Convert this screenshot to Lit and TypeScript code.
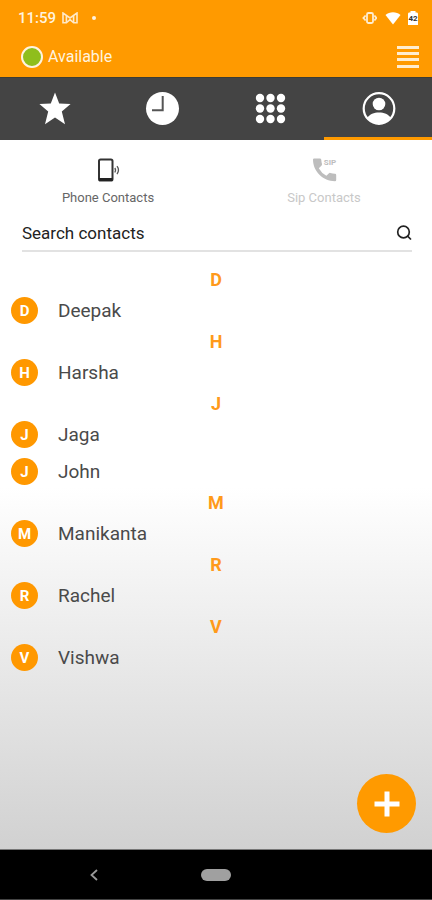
import { LitElement, html, css, svg } from "lit";
import { customElement, property, state } from "lit/decorators.js";
import { classMap } from "lit/directives/class-map.js";

interface Section {
  letter: string;
  names: string[];
}

const SECTIONS: Section[] = [
  { letter: "D", names: ["Deepak"] },
  { letter: "H", names: ["Harsha"] },
  { letter: "J", names: ["Jaga", "John"] },
  { letter: "M", names: ["Manikanta"] },
  { letter: "R", names: ["Rachel"] },
  { letter: "V", names: ["Vishwa"] },
];

const TABS = [
  {
    label: "Favourites",
    icon: svg`<path fill="#fff" d="M19 1.5 L23.2 12.6 L34.6 13 L25.8 20.4 L29 33.2 L19 26.4 L9 33.2 L12.2 20.4 L3.4 13 L14.8 12.6 Z"/>`,
  },
  {
    label: "Recents",
    icon: svg`<circle cx="18.5" cy="17.5" r="16.5" fill="#fff"/><path d="M18.7 5 V19.2 H8" fill="none" stroke="#555" stroke-width="2"/>`,
  },
  {
    label: "Keypad",
    icon: svg`${[7, 17.5, 28].map((y) =>
      [8, 18.5, 29].map((x) => svg`<circle cx=${x} cy=${y} r="4.2" fill="#fff"/>`)
    )}`,
  },
  {
    label: "Contacts",
    icon: svg`<circle cx="19" cy="17.5" r="15.3" fill="none" stroke="#fff" stroke-width="2.2"/>
      <circle cx="19" cy="13" r="6.3" fill="#fff"/>
      <path fill="#fff" d="M7.5 26.5 C9.5 23.2 14 21.4 19 21.4 S28.5 23.2 30.5 26.5 C28 31 23.5 33 19 33 S10 31 7.5 26.5 Z"/>`,
  },
];

@customElement("contact-row")
export class ContactRow extends LitElement {
  @property() name = "";

  static styles = css`
    :host {
      display: block;
    }
    .row {
      display: flex;
      align-items: center;
      gap: 20px;
      width: 100%;
      height: 37px;
      padding: 0 11px;
      border: 0;
      background: none;
      font: 400 19px/24px Roboto, sans-serif;
      color: #4a4a4a;
      text-align: left;
    }
    .avatar {
      display: grid;
      place-items: center;
      width: 27px;
      height: 27px;
      border-radius: 50%;
      background: #ff9800;
      color: #fff;
      font-size: 15px;
      font-weight: 700;
    }
  `;

  render() {
    return html`<button class="row">
      <span class="avatar" aria-hidden="true">${this.name.charAt(0)}</span>
      <span>${this.name}</span>
    </button>`;
  }
}

@customElement("app-root")
export class AppRoot extends LitElement {
  @state() private tab = 3;
  @state() private source = 0;

  static styles = css`
    :host {
      display: flex;
      flex-direction: column;
      min-height: 100vh;
      font-family: Roboto, sans-serif;
      background: #000;
    }
    * {
      box-sizing: border-box;
    }
    svg {
      display: block;
    }
    button {
      border: 0;
      padding: 0;
      background: none;
      font-family: inherit;
    }
    .top {
      background: #ff9a00;
      color: #fff3df;
      padding: 0 13px 0 18px;
      height: 77px;
    }
    .status,
    .bar {
      display: flex;
      align-items: center;
      justify-content: space-between;
    }
    .status {
      height: 36px;
      font: 500 15px/20px Roboto, sans-serif;
    }
    .group {
      display: flex;
      align-items: center;
      gap: 6px;
    }
    .bar {
      height: 41px;
      padding-left: 3px;
    }
    .presence {
      gap: 5px;
      color: #fff3df;
      font-size: 16px;
      line-height: 20px;
    }
    .dot {
      width: 22px;
      height: 22px;
      border: 2px solid #fff3df;
      border-radius: 50%;
      background: #8fbe1c;
    }
    .tabs {
      display: grid;
      grid-template-columns: repeat(4, 1fr);
      height: 63px;
      background: #444;
      border-top: 1px solid #3c3c34;
    }
    .tab {
      display: grid;
      place-items: center;
      border-bottom: 3px solid transparent;
      padding-top: 2px;
    }
    .tab.on {
      border-bottom-color: #ff9a00;
    }
    .main {
      flex: 1;
      position: relative;
      background: linear-gradient(#fff 49%, #d1d1d1 100%);
      border-bottom: 1px solid #777;
    }
    .sources {
      display: grid;
      grid-template-columns: repeat(2, 1fr);
      padding-top: 16px;
    }
    .source {
      display: flex;
      flex-direction: column;
      align-items: center;
      gap: 6px;
      font-size: 13px;
      line-height: 16px;
      color: #c8c8c8;
    }
    .source.on {
      color: #666;
    }
    .search {
      display: flex;
      align-items: center;
      margin: 10px 20px 0 22px;
      height: 36px;
      border-bottom: 2px solid #e2e2e2;
    }
    .search input {
      flex: 1;
      min-width: 0;
      border: 0;
      padding: 0;
      outline: 0;
      background: none;
      font: 400 17px/22px Roboto, sans-serif;
      color: #222;
    }
    .search input::placeholder {
      color: #222;
      opacity: 1;
    }
    .list {
      padding: 15px 0 92px;
    }
    .letter {
      margin: 0;
      font-size: 18px;
      font-weight: 700;
      line-height: 25px;
      color: #ff9a1a;
      text-align: center;
    }
    .add {
      position: absolute;
      right: 16px;
      bottom: 16px;
      display: grid;
      place-items: center;
      width: 59px;
      height: 59px;
      border-radius: 50%;
      background: #ff9a00;
    }
    .nav {
      display: grid;
      grid-template-columns: 1fr 56px 1fr;
      align-items: center;
      justify-items: center;
      height: 50px;
      background: #000;
      border-bottom: 1px solid #444;
    }
    .home {
      width: 30px;
      height: 12px;
      border-radius: 6px;
      background: #a0a0a0;
    }
  `;

  render() {
    return html`
      <header class="top">
        <div class="status">
          <div class="group">
            <span>11:59</span>
            <svg width="16" height="12" viewBox="0 0 16 12" fill="none" stroke="#ffe9c8" stroke-width="1.6">
              <path d="M1 11.5 V1 L8 6 L15 1 V11.5 M4.4 11.5 V4 M11.6 11.5 V4 M1 10.8 H4.4 L8 7.6 L11.6 10.8 H15" />
            </svg>
            <svg width="18" height="12" viewBox="0 0 18 12"><circle cx="10" cy="6" r="2" fill="#fff3df" /></svg>
          </div>
          <div class="group">
            <svg width="16" height="14" viewBox="0 0 16 14" fill="none" stroke="#ffedcf" stroke-width="1.8">
              <rect x="6" y="2" width="6" height="10" rx="1.5" />
              <path d="M4.6 4.5 L2.4 7 L4.6 9.5 M13.4 4.5 L15.4 7 L13.4 9.5" />
            </svg>
            <svg width="18" height="14" viewBox="0 0 18 14">
              <path fill="#fff" d="M10 13.5 L2.5 4 C6.5 0.2 13.5 0.2 17.5 4 Z" />
            </svg>
            <svg width="12" height="16" viewBox="0 0 12 16">
              <path fill="#fff" d="M3.5 1 H8.5 V2.5 H10 Q11 2.5 11 4 V15 H1 V4 Q1 2.5 2 2.5 H3.5 Z" />
              <text x="6" y="11" font-size="8" font-weight="700" text-anchor="middle" fill="#333">42</text>
            </svg>
          </div>
        </div>
        <div class="bar">
          <button class="group presence"><span class="dot"></span>Available</button>
          <button aria-label="Menu">
            <svg width="22" height="24" viewBox="0 0 22 24" fill="#ffedcf">
              <rect y="1" width="22" height="3" /><rect y="7" width="22" height="3" />
              <rect y="13" width="22" height="3" /><rect y="20" width="22" height="3" />
            </svg>
          </button>
        </div>
      </header>
      <nav class="tabs" aria-label="Sections">
        ${TABS.map(
          (t, i) => html`<button
            class=${classMap({ tab: true, on: i === this.tab })}
            aria-label=${t.label}
            @click=${() => (this.tab = i)}
          >
            <svg width="36" height="36" viewBox="0 0 36 36">${t.icon}</svg>
          </button>`
        )}
      </nav>
      <main class="main">
        <div class="sources">
          <button class=${classMap({ source: true, on: this.source === 0 })} @click=${() => (this.source = 0)}>
            <svg width="26" height="28" viewBox="0 0 26 28">
              <rect x="4" y="3.5" width="13.5" height="21" rx="1.6" fill="none" stroke="#333" stroke-width="2" />
              <path d="M4 23.5 H17.5" stroke="#222" stroke-width="3" />
              <path d="M19.8 12 Q21.3 14 19.8 16.5 M22 10.2 Q25 14 22 18.2" fill="none" stroke="#555" stroke-width="1.3" />
            </svg>
            Phone Contacts
          </button>
          <button class=${classMap({ source: true, on: this.source === 1 })} @click=${() => (this.source = 1)}>
            <svg width="26" height="28" viewBox="0 0 26 28">
              <path
                fill="#bdbdbd"
                d="M3.1 2.5 H8.9 Q10 2.5 10.2 3.6 Q10.4 6 11 8 Q11.2 8.8 10.6 9.4 L7.8 12.2 Q10.6 17.3 15.4 19.8 L18 17.2 Q18.6 16.6 19.4 16.9 Q21.6 17.6 24 17.7 Q25.2 17.8 25.2 19 V24 Q25.2 25.2 24 25.2 C12 25.2 2 15.6 2 3.6 Q2 2.5 3.1 2.5 Z"
              />
              <text x="19" y="9" font-size="8" font-weight="700" text-anchor="middle" fill="#bdbdbd">SIP</text>
            </svg>
            Sip Contacts
          </button>
        </div>
        <div class="search">
          <input type="search" aria-label="Search contacts" placeholder="Search contacts" />
          <button aria-label="Search">
            <svg width="16" height="16" viewBox="0 0 16 16" fill="none" stroke="#222" stroke-width="1.7">
              <circle cx="7.5" cy="7" r="5.8" /><path d="M11.3 10.8 L15 14.5" />
            </svg>
          </button>
        </div>
        <div class="list">
          ${SECTIONS.map(
            (s) => html`<section>
              <h2 class="letter">${s.letter}</h2>
              ${s.names.map((n) => html`<contact-row .name=${n}></contact-row>`)}
            </section>`
          )}
        </div>
        <button class="add" aria-label="Add contact">
          <svg width="28" height="28" viewBox="0 0 28 28" stroke="#fff" stroke-width="5">
            <path d="M14 1.5 V26.5 M1.5 14 H26.5" />
          </svg>
        </button>
      </main>
      <nav class="nav" aria-label="System">
        <button aria-label="Back">
          <svg width="8" height="12" viewBox="0 0 8 12" fill="none" stroke="#999" stroke-width="1.8">
            <path d="M7 1 L1.5 6 L7 11" />
          </svg>
        </button>
        <button class="home" aria-label="Home"></button>
      </nav>
    `;
  }
}
